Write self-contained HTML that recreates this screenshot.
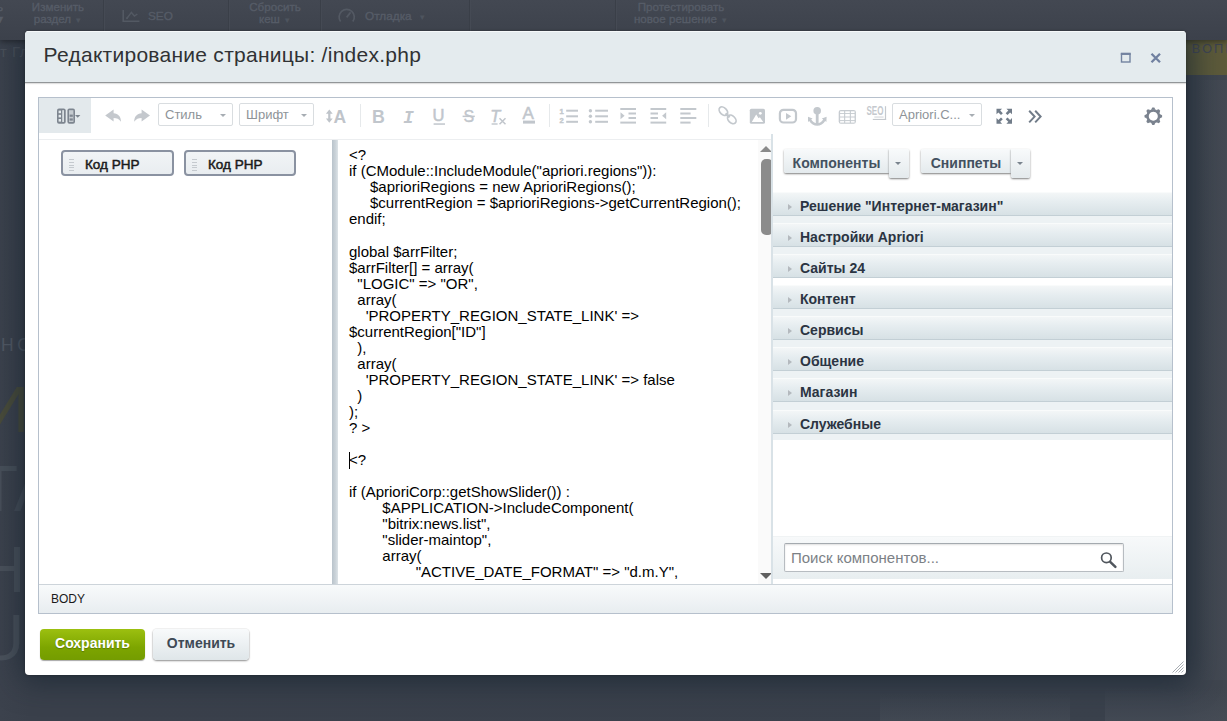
<!DOCTYPE html>
<html lang="ru">
<head>
<meta charset="utf-8">
<title>Редактирование страницы: /index.php</title>
<style>
*{box-sizing:border-box;margin:0;padding:0}
html,body{width:1227px;height:721px;overflow:hidden}
body{font-family:"Liberation Sans",sans-serif;background:#333b46;position:relative}
.abs{position:absolute}
/* ---------- background page (dimmed) ---------- */
#bg{left:0;top:0;width:1227px;height:721px;overflow:hidden;background:linear-gradient(90deg,#3c424d 0,#3a404b 30px,#3a414c 1180px,#40464f 1227px)}
#topbar{left:0;top:0;width:1227px;height:40px;background:linear-gradient(#434852,#3c414b);box-shadow:0 2px 5px rgba(0,0,0,.35)}
#topbar .t{position:absolute;color:#565c67;font-size:11.6px;line-height:12px;-webkit-text-stroke:.35px #565c67;text-align:center;white-space:nowrap}
#topbar .t1{position:absolute;color:#565c67;font-size:11.8px;line-height:14px;-webkit-text-stroke:.35px #565c67;white-space:nowrap}
#topbar .sep{position:absolute;top:0;width:1px;height:40px;background:#3a3f48;box-shadow:1px 0 0 #454a54}
.ghost{position:absolute;color:#4a515c;white-space:nowrap;font-weight:normal}
/* ---------- dialog ---------- */
#dlg{left:25px;top:31px;width:1161px;height:644px;background:#fff;border-radius:4px;box-shadow:0 0 3px rgba(0,0,0,.3);overflow:hidden}
#dlgsh{left:25px;top:31px;width:1161px;height:644px;border-radius:4px;box-shadow:0 2px 30px 4px rgba(20,34,46,.66)}
#dlg-head{left:0;top:0;width:1161px;height:52px;background:#e4ebee;border-bottom:1px solid #929698;box-shadow:0 1px 1px rgba(0,0,0,.12),inset 0 1px 0 #f6f9fa}
#dlg-title{left:18.6px;top:11px;font-size:21px;line-height:26px;color:#303234;white-space:nowrap;letter-spacing:.265px}
/* editor */
#ed{left:13px;top:66px;width:1135px;height:517px;border:1px solid #b6c0cc;background:#fff}
#tb{left:0;top:0;width:732px;height:42px;border-bottom:1px solid #eceef0;background:#fff}
#splitbtn{left:0;top:0;width:52px;height:35px;background:#e3e9ec}
.sel{position:absolute;top:5px;height:23px;border:1px solid #d9dde0;border-radius:2px;background:#fff;color:#8e9398;font-size:13px;line-height:21px;padding-left:6px;white-space:nowrap}
.sel:after{content:"";position:absolute;right:6px;top:10px;border:3.5px solid transparent;border-top:3.5px solid #a7adb3;border-bottom:0}
/* panes */
#left{left:0;top:42px;width:293px;height:444px;background:#fff}
.sur{position:absolute;top:10px;height:26px;width:113px;border:2px solid #8a92a1;border-radius:4px;background:linear-gradient(#f1f4f6,#e9edf0);font-weight:normal;-webkit-text-stroke:.5px #1a1a1a;font-size:13.5px;line-height:26px;color:#1a1a1a;padding-left:22px;white-space:nowrap}
.sur i{position:absolute;left:6px;top:7px;width:5px;height:12px;background:repeating-linear-gradient(#c5cacf 0,#c5cacf 1px,transparent 1px,transparent 2.75px)}
#divider{left:293px;top:42px;width:6px;height:444px;background:linear-gradient(90deg,#b9c3cb,#cbd3d9 60%,#dde3e7)}
#code{left:299px;top:42px;width:433px;height:444px;background:#fff;overflow:hidden}
#codetxt{left:11px;top:7px;width:410px;font-size:15px;line-height:16px;color:#000;white-space:pre-wrap;tab-size:8;-moz-tab-size:8}
#caret{left:11px;top:312px;width:1px;height:17px;background:#000}
#sb{left:420px;top:0;width:13px;height:444px;background:#fafafa;overflow:hidden}
#sb .up{left:2px;top:6px;border:6px solid transparent;border-bottom:6px solid #8a8a8a;border-top:0}
#sb .dn{left:2px;top:433px;border:6px solid transparent;border-top:6px solid #606060;border-bottom:0}
#sb .th{left:3px;top:19px;width:12px;height:76px;background:#8b8b8b;border-radius:5px}
/* taskbar */
#task{left:732px;top:36px;width:401px;height:450px;background:#fff;border-left:2px solid #d9e2e7}
.tbtn{position:absolute;top:15px;height:24px;border-radius:2px 0 0 2px;background:linear-gradient(#f8fafb,#e4eaed);box-shadow:0 1px 2px rgba(0,0,0,.5);font-weight:bold;font-size:14px;line-height:28px;color:#435160;text-align:center;white-space:nowrap}
.tarr{position:absolute;top:15px;height:29px;width:20px;border-radius:0 2px 2px 2px;background:linear-gradient(#f8fafb,#e4eaed);box-shadow:0 1px 2px rgba(0,0,0,.5)}
.tarr:after{content:"";position:absolute;left:6px;top:13px;border:3.5px solid transparent;border-top:3.5px solid #7a848e;border-bottom:0}
.sec{position:absolute;left:0;width:399px;height:24px;background:linear-gradient(#f3f6f7 0,#e6edf0 40%,#d7e1e5 100%);border-top:1px solid #f9fbfb;border-bottom:1px solid #c3cfd5;font-weight:bold;font-size:14px;line-height:27px;color:#2b3442;padding-left:27px;white-space:nowrap}
.sec:before{content:"";position:absolute;left:15px;top:11px;border:3.5px solid transparent;border-left:4.5px solid #b4b9be;border-right:0}
.secgap{position:absolute;left:0;width:399px;height:7px;background:#edf2f4}
#srch{left:0;top:402px;width:399px;height:43px;background:linear-gradient(#f7f9fa,#e8eef0);border-top:1px solid #f0f3f4}
#srchin{left:11px;top:6px;width:340px;height:29px;border:1px solid #b7bcc1;border-top-color:#a4aaaf;border-radius:2px;background:#fff;box-shadow:inset 0 1px 2px rgba(0,0,0,.13);font-size:15px;line-height:27px;color:#7c8186;padding-left:6px}
#status{left:0;top:486px;width:1133px;height:29px;background:linear-gradient(#f8fafb,#e8edf0);border-top:1px solid #cdd4da;font-size:12px;line-height:28px;color:#1a1a1a;padding-left:12px}
/* bottom buttons */
.btn{position:absolute;top:598px;height:31px;border-radius:4px;font-weight:bold;font-size:14px;line-height:28px;text-align:center;white-space:nowrap}
#save{left:15px;width:105px;color:#fff;background:linear-gradient(#9cc010,#7da500 60%,#749c00);box-shadow:0 1px 1px rgba(0,0,0,.35);text-shadow:0 1px 1px rgba(60,80,0,.5)}
#cancel{left:128px;width:96px;color:#3e4a56;background:linear-gradient(#f8fafb,#dfe6e9);box-shadow:0 1px 2px rgba(0,0,0,.42),0 0 0 1px rgba(0,0,0,.04)}
#ov{left:0;top:0;width:1227px;height:721px;pointer-events:none}
</style>
</head>
<body>
<div id="bg" class="abs">
  <div class="ghost" style="left:0;top:44px;font-size:15px;line-height:16px;color:#4b515b;letter-spacing:.5px">т Гл</div>
  <div class="ghost" style="left:1px;top:335px;font-size:17.5px;line-height:20px;color:#525964;letter-spacing:3.5px">НО</div>
  <div class="ghost" style="left:-17px;top:378px;font-size:64px;line-height:64px;color:#494b3a">И</div>
  <div class="ghost" style="left:-21px;top:457px;font-size:64px;line-height:64px;color:#48505a">Т</div>
  <div class="ghost" style="left:14px;top:457px;font-size:64px;line-height:64px;color:#464d58">А</div>
  <div class="ghost" style="left:-21px;top:538px;font-size:64px;line-height:64px;color:#4a515b">Н</div>
  <div class="ghost" style="left:-22px;top:606px;font-size:64px;line-height:64px;color:#4b525c">U</div>
  <div class="abs" style="left:1186px;top:40px;width:41px;height:35px;background:linear-gradient(90deg,#55553a,#5e5b3a)"></div>
  <div class="ghost" style="left:1191.5px;top:41px;font-family:'DejaVu Sans',sans-serif;font-size:13px;line-height:16px;color:#3f4552;letter-spacing:1.6px">ВОПР</div>
  <div id="dlgsh" class="abs"></div>
  <div class="abs" style="left:880px;top:694px;width:190px;height:27px;background:linear-gradient(180deg,rgba(75,82,92,0),rgba(75,82,92,.42))"></div>
  <div class="abs" style="left:1105px;top:688px;width:122px;height:33px;background:linear-gradient(180deg,rgba(78,84,94,0),rgba(78,84,94,.42))"></div>
  <div class="abs" style="left:1198px;top:80px;width:29px;height:600px;background:linear-gradient(90deg,rgba(72,78,88,0),rgba(72,78,88,.45))"></div>

  <div id="topbar" class="abs">
    <div class="t" style="left:-8px;top:1px;width:16px">ь<br>▾</div>
    <div class="t" style="left:27px;top:1px;width:62px">Изменить<br>раздел <span style="font-size:8px;color:#4e545e;-webkit-text-stroke:0">▼</span></div>
    <div class="sep" style="left:103px"></div>
    <div class="t1" style="left:148px;top:9px">SEO</div>
    <div class="sep" style="left:228px"></div>
    <div class="t" style="left:244px;top:1px;width:62px">Сбросить<br>кеш <span style="font-size:8px;color:#4e545e;-webkit-text-stroke:0">▼</span></div>
    <div class="sep" style="left:320px"></div>
    <div class="t1" style="left:365px;top:9px">Отладка &nbsp;<span style="font-size:8px;color:#4e545e;-webkit-text-stroke:0">▼</span></div>
    <div class="sep" style="left:469px"></div>
    <div class="sep" style="left:615px"></div>
    <div class="t" style="left:630px;top:1px;width:102px">Протестировать<br>новое решение <span style="font-size:8px;color:#4e545e;-webkit-text-stroke:0">▼</span></div>
  </div>
</div>

<div id="dlg" class="abs">
  <div id="dlg-head" class="abs">
    <div id="dlg-title" class="abs">Редактирование страницы: /index.php</div>
  </div>

  <div id="ed" class="abs">
    <div id="tb" class="abs">
      <div id="splitbtn" class="abs"></div>
      <div class="sel" style="left:119px;width:75px">Стиль</div>
      <div class="sel" style="left:200px;width:75px">Шрифт</div>
    </div>
    <div class="sel" style="left:853px;width:90px">Apriori.C...</div>

    <div id="left" class="abs">
      <div class="sur" style="left:22px"><i></i>Код PHP</div>
      <div class="sur" style="left:145px;width:112px"><i></i>Код PHP</div>
    </div>
    <div id="divider" class="abs"></div>
    <div id="code" class="abs">
<div id="codetxt" class="abs">&lt;?
if (CModule::IncludeModule("apriori.regions")):
<span style="padding-left:21px"></span>$aprioriRegions = new AprioriRegions();
<span style="padding-left:21px"></span>$currentRegion = $aprioriRegions-&gt;getCurrentRegion();
endif;
<span style="line-height:17px;display:inline-block;height:17px;vertical-align:top"> </span>
global $arrFilter;
$arrFilter[] = array(
  "LOGIC" =&gt; "OR",
  array(
    'PROPERTY_REGION_STATE_LINK' =&gt; $currentRegion["ID"]
  ),
  array(
    'PROPERTY_REGION_STATE_LINK' =&gt; false
  )
);
? &gt;

&lt;?

if (AprioriCorp::getShowSlider()) :
	$APPLICATION-&gt;IncludeComponent(
	"bitrix:news.list",
	"slider-maintop",
	array(
		"ACTIVE_DATE_FORMAT" =&gt; "d.m.Y",</div>
      <div id="caret" class="abs"></div>
      <div id="sb" class="abs"><div class="up abs"></div><div class="th abs"></div><div class="dn abs"></div></div>
    </div>

    <div id="task" class="abs">
      <div class="tbtn" style="left:11px;width:105px">Компоненты</div><div class="tarr" style="left:116px"></div>
      <div class="tbtn" style="left:148px;width:90px">Сниппеты</div><div class="tarr" style="left:238px;width:19px"></div>
      <div class="sec" style="top:58px">Решение "Интернет-магазин"</div><div class="secgap" style="top:82px"></div>
      <div class="sec" style="top:89px">Настройки Apriori</div><div class="secgap" style="top:113px"></div>
      <div class="sec" style="top:120px">Сайты 24</div>
      <div class="sec" style="top:151px">Контент</div><div class="secgap" style="top:175px"></div>
      <div class="sec" style="top:182px">Сервисы</div><div class="secgap" style="top:206px"></div>
      <div class="sec" style="top:213px">Общение</div><div class="secgap" style="top:237px"></div>
      <div class="sec" style="top:244px">Магазин</div><div class="secgap" style="top:268px;height:8px"></div>
      <div class="sec" style="top:276px">Служебные</div><div class="secgap" style="top:300px;height:6px"></div>
      <div id="srch" class="abs"><div id="srchin" class="abs">Поиск компонентов...</div></div>
    </div>

    <div id="status" class="abs">BODY</div>
  </div>

  <div id="save" class="btn">Сохранить</div>
  <div id="cancel" class="btn">Отменить</div>
</div>
<!--OVS--><svg id="ov" class="abs" width="1227" height="721" viewBox="0 0 1227 721" font-family="Liberation Sans, sans-serif">
<!-- topbar icons -->
<g fill="none" stroke="#535963" stroke-width="1.6">
  <path d="M123.2,10 V21.2 H139.4"/>
  <path d="M127,18.2 L131.4,12.4 L134.4,16 L137.4,14" stroke-width="1.5"/>
  <circle cx="127" cy="18.2" r="1" fill="#535963" stroke="none"/>
  <path d="M340.6,21.6 A7.6,7.6 0 1 1 352.8,21.6" stroke-width="1.7"/>
  <path d="M346.6,17.4 L350.6,12.4" stroke-width="1.7"/>
</g>
<!-- title bar icons -->
<g fill="none" stroke="#7383a0">
  <rect x="1121.5" y="54" width="8.5" height="8" stroke-width="1.4"/>
  <line x1="1120.8" y1="53.8" x2="1130.7" y2="53.8" stroke-width="2.2"/>
  <path d="M1151.5,53.8 L1160,62.3 M1160,53.8 L1151.5,62.3" stroke="#7080a0" stroke-width="2.3"/>
</g>
<!-- split-mode icon -->
<g>
  <rect x="57" y="108.4" width="8.7" height="15.4" rx="2" fill="#7d858f"/>
  <rect x="58.6" y="110.6" width="2.4" height="2.6" fill="#e3e9ec"/><rect x="58.6" y="114.8" width="2.4" height="2.6" fill="#e3e9ec"/><rect x="58.6" y="119" width="2.4" height="2.6" fill="#e3e9ec"/>
  <rect x="62.3" y="110.2" width="1.6" height="11.8" fill="#e3e9ec"/>
  <rect x="67.4" y="108.4" width="7.6" height="15.4" rx="2" fill="#7d858f"/>
  <rect x="69" y="110.2" width="4.4" height="11.8" fill="#c5cbd0"/>
  <rect x="69.6" y="114.6" width="3.2" height="2.2" fill="#7d858f"/><rect x="69.6" y="118.4" width="3.2" height="2.2" fill="#7d858f"/>
  <path d="M75,115 h5.4 l-2.7,2.8 z" fill="#7d858f"/>
</g>
<!-- undo / redo -->
<g fill="#c4c8cd">
  <path d="M105.2,115.6 L113.6,109.6 L113.6,113.3 C118.2,113.5 121,116.6 121,121.8 C119,118.9 116.8,118.1 113.6,118.1 L113.6,121.6 Z"/>
  <path d="M150,115.6 L141.6,109.6 L141.6,113.3 C137,113.5 134.2,116.6 134.2,121.8 C136.2,118.9 138.4,118.1 141.6,118.1 L141.6,121.6 Z"/>
</g>
<!-- font size -->
<g fill="#bfc4ca">
  <path d="M329.3,109.6 l3.4,4.2 h-2.3 v4.8 h2.3 l-3.4,4.2 l-3.4,-4.2 h2.3 v-4.8 h-2.3 z"/>
  <text x="333.6" y="122.5" font-size="17.5" font-weight="bold">A</text>
</g>
<!-- separators -->
<g fill="#e6e9eb">
  <rect x="360" y="104" width="1" height="23"/><rect x="549" y="104" width="1" height="23"/><rect x="708" y="104" width="1" height="23"/>
</g>
<!-- B I U S Tx A -->
<g fill="#c1c6cc">
  <text x="372" y="122.6" font-size="17.8" font-weight="bold">B</text>
  <text x="403.3" y="122.6" font-size="17.5" font-weight="bold" font-style="italic" font-family="Liberation Mono, monospace">I</text>
  <text x="432.6" y="121.3" font-size="16.5" stroke="#c1c6cc" stroke-width=".5">U</text><rect x="433.6" y="123.3" width="11.4" height="1.5"/>
  <text x="463.5" y="122.3" font-size="16" stroke="#c1c6cc" stroke-width=".4">S</text><rect x="462.6" y="115.6" width="12.2" height="1.5"/>
  <text x="490.3" y="122.3" font-size="16.5" font-style="italic" stroke="#c1c6cc" stroke-width=".5">T</text><rect x="491.6" y="123.3" width="6" height="1.4"/>
  <path d="M499.5,118.2 L505.5,124.2 M505.5,118.2 L499.5,124.2" stroke="#c1c6cc" stroke-width="1.5" fill="none"/>
  <text x="522.6" y="118.8" font-size="17" stroke="#c1c6cc" stroke-width=".5">A</text><rect x="523" y="120.6" width="12" height="3"/>
</g>
<!-- lists / indent / align -->
<g fill="#c3c8cd">
  <rect x="566.2" y="109.7" width="11.8" height="2"/><rect x="566.2" y="115.3" width="11.8" height="2"/><rect x="566.2" y="120.8" width="11.8" height="2"/>
  <text x="559.4" y="114.3" font-size="7.6" font-weight="bold" stroke="#c3c8cd" stroke-width=".4">1</text><text x="559.4" y="123.4" font-size="7.6" font-weight="bold" stroke="#c3c8cd" stroke-width=".4">2</text>
  <circle cx="590.4" cy="110.7" r="1.7"/><circle cx="590.4" cy="116.3" r="1.7"/><circle cx="590.4" cy="121.8" r="1.7"/>
  <rect x="595.2" y="109.7" width="12.8" height="2"/><rect x="595.2" y="115.3" width="12.8" height="2"/><rect x="595.2" y="120.8" width="12.8" height="2"/>
  <rect x="620.3" y="108" width="15.7" height="2"/><rect x="628.5" y="112.5" width="7.5" height="2"/><rect x="628.5" y="117" width="7.5" height="2"/><rect x="620.3" y="121.6" width="15.7" height="2"/>
  <path d="M620.5,112.3 L624.6,115.7 L620.5,119.2 Z"/>
  <rect x="650.5" y="108" width="15.7" height="2"/><rect x="650.5" y="112.5" width="7.5" height="2"/><rect x="650.5" y="117" width="7.5" height="2"/><rect x="650.5" y="121.6" width="15.7" height="2"/>
  <path d="M666.2,112.3 L662.1,115.7 L666.2,119.2 Z"/>
  <rect x="680.3" y="108" width="16" height="2"/><rect x="680.3" y="112.5" width="10.3" height="2"/><rect x="680.3" y="117" width="16" height="2"/><rect x="680.3" y="121.6" width="10.3" height="2"/>
</g>
<!-- link -->
<g fill="none" stroke="#c3c8cd" stroke-width="1.7">
  <ellipse cx="723.4" cy="111.2" rx="5" ry="3.4" transform="rotate(45 723.4 111.2)"/>
  <ellipse cx="731.8" cy="119.4" rx="5" ry="3.4" transform="rotate(45 731.8 119.4)"/>
  <path d="M725.6,113.3 L729.6,117.3" stroke-width="2.4"/>
</g>
<!-- image -->
<g>
  <rect x="749.8" y="108.7" width="15.2" height="15.1" rx="1.6" fill="#c3c8cd"/>
  <path d="M751.8,122 L756.2,114.5 L758.6,118.3 L759.9,117.2 L763.2,122 Z" fill="#fff"/>
  <circle cx="760.3" cy="113.3" r="1.4" fill="#fff"/>
</g>
<!-- video -->
<g>
  <rect x="779.9" y="109.8" width="16.1" height="12.7" rx="3.6" fill="none" stroke="#c3c8cd" stroke-width="2.2"/>
  <path d="M786,112.9 L791.3,116.3 L786,119.8 Z" fill="#c3c8cd"/>
</g>
<!-- anchor -->
<g fill="#c3c8cd" stroke="none">
  <circle cx="817.2" cy="110.8" r="3.8"/>
  <rect x="815.8" y="113" width="2.8" height="12"/>
  <path d="M808,116.8 L812.6,118.4 L811.2,119.6 C812.6,122 814.8,123.2 817.2,123.2 C819.6,123.2 821.8,122 823.2,119.6 L821.8,118.4 L826.6,116.8 L826.4,122 L825.2,121 C823.4,124.2 820.4,125.8 817.2,125.8 C814,125.8 811,124.2 809.2,121 L808,122 Z"/>
</g>
<!-- table -->
<g>
  <rect x="838.7" y="109.9" width="17.2" height="13.9" rx="2.2" fill="#c6cbd0"/>
  <g fill="#fff"><rect x="840.1" y="111.3" width="4.0" height="1.7"/><rect x="845.2" y="111.3" width="4.6" height="1.7"/><rect x="850.9" y="111.3" width="3.7" height="1.7"/><rect x="840.1" y="113.9" width="4.0" height="2.6"/><rect x="845.2" y="113.9" width="4.6" height="2.6"/><rect x="850.9" y="113.9" width="3.7" height="2.6"/><rect x="840.1" y="117.5" width="4.0" height="2.6"/><rect x="845.2" y="117.5" width="4.6" height="2.6"/><rect x="850.9" y="117.5" width="3.7" height="2.6"/><rect x="840.1" y="121.1" width="4.0" height="1.5"/><rect x="845.2" y="121.1" width="4.6" height="1.5"/><rect x="850.9" y="121.1" width="3.7" height="1.5"/></g>
</g>
<!-- seo -->
<g fill="#c5c9ce">
  <text x="866.4" y="114.5" font-size="12.4" font-weight="bold" textLength="17" lengthAdjust="spacingAndGlyphs">SEO</text>
  <rect x="874.3" y="116.5" width="9.3" height="1.1" fill="#d5d8dc"/>
  <rect x="884.9" y="106.2" width="1.2" height="13.8"/>
  <rect x="872.8" y="118.9" width="13.3" height="1.1"/>
</g>
<!-- fullscreen -->
<g fill="#717c89">
  <path d="M996.5,108.7 h5.6 l-1.9,1.9 l2.6,2.6 l-1.8,1.8 l-2.6,-2.6 l-1.9,1.9 z"/>
  <path d="M1012,108.7 v5.6 l-1.9,-1.9 l-2.6,2.6 l-1.8,-1.8 l2.6,-2.6 l-1.9,-1.9 z"/>
  <path d="M996.5,123.7 v-5.6 l1.9,1.9 l2.6,-2.6 l1.8,1.8 l-2.6,2.6 l1.9,1.9 z"/>
  <path d="M1012,123.7 h-5.6 l1.9,-1.9 l-2.6,-2.6 l1.8,-1.8 l2.6,2.6 l1.9,-1.9 z"/>
</g>
<!-- more >> -->
<g fill="none" stroke="#717c89" stroke-width="2">
  <path d="M1029.2,110.8 L1034.6,116.6 L1029.2,122.4"/><path d="M1035.2,110.8 L1040.6,116.6 L1035.2,122.4"/>
</g>
<!-- gear -->
<g transform="translate(1153.3,116.2)" fill="#7a828e">
  <path fill-rule="evenodd" d="M0,-7 A7,7 0 1,0 0.001,-7 Z M0,-4.5 A4.5,4.5 0 1,1 -0.001,-4.5 Z"/>
  <path d="M-2.2,-6.4 L-1,-8.8 L1,-8.8 L2.2,-6.4 Z" transform="rotate(0)"/>
  <path d="M-2.2,-6.4 L-1,-8.8 L1,-8.8 L2.2,-6.4 Z" transform="rotate(45)"/>
  <path d="M-2.2,-6.4 L-1,-8.8 L1,-8.8 L2.2,-6.4 Z" transform="rotate(90)"/>
  <path d="M-2.2,-6.4 L-1,-8.8 L1,-8.8 L2.2,-6.4 Z" transform="rotate(135)"/>
  <path d="M-2.2,-6.4 L-1,-8.8 L1,-8.8 L2.2,-6.4 Z" transform="rotate(180)"/>
  <path d="M-2.2,-6.4 L-1,-8.8 L1,-8.8 L2.2,-6.4 Z" transform="rotate(225)"/>
  <path d="M-2.2,-6.4 L-1,-8.8 L1,-8.8 L2.2,-6.4 Z" transform="rotate(270)"/>
  <path d="M-2.2,-6.4 L-1,-8.8 L1,-8.8 L2.2,-6.4 Z" transform="rotate(315)"/>
</g>
<!-- search magnifier -->
<g fill="none" stroke="#50565d">
  <circle cx="1106.4" cy="557.8" r="4.8" stroke-width="1.7"/>
  <path d="M1110.2,561.8 L1115.4,566.8" stroke-width="2.5" stroke-linecap="round"/>
</g>
<!-- resize grip -->
<g stroke="#a9aeb3" stroke-width="1" fill="none">
  <path d="M1172.5,672.5 L1183.5,661.5 M1175.5,672.5 L1183.5,664.5 M1178.5,672.5 L1183.5,667.5 M1181.5,672.5 L1183.5,670.5"/>
</g>
</svg>
<!--OVE-->
</body>
</html>
